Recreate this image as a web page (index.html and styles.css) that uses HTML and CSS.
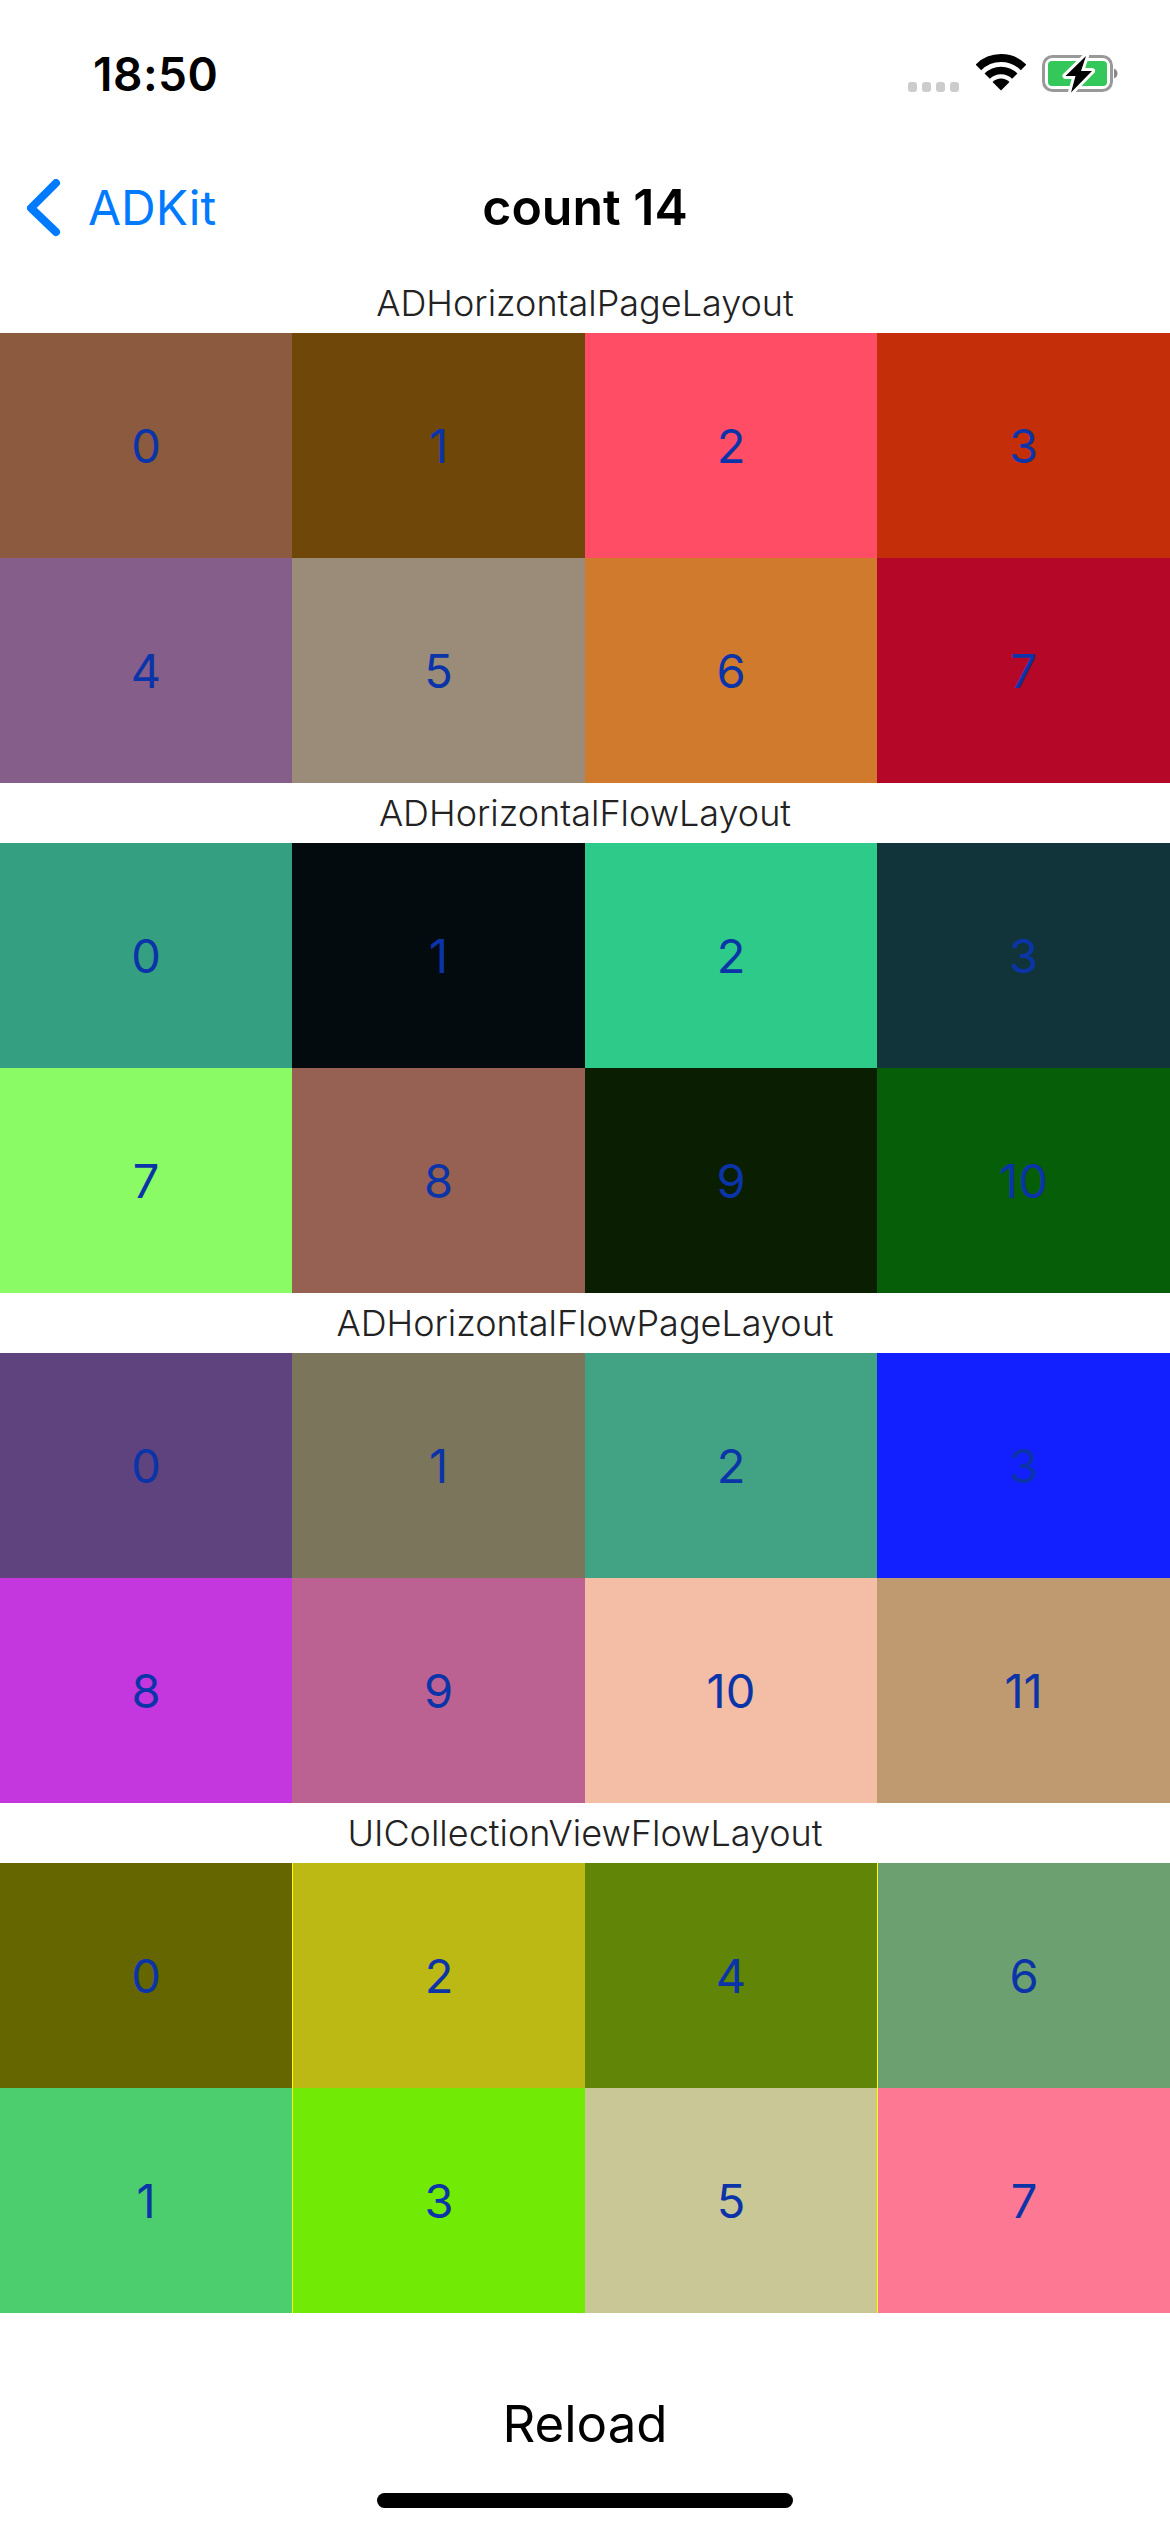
FILE: index.html
```html
<!DOCTYPE html>
<html lang="en">
<head>
  <meta charset="UTF-8">
  <meta name="viewport" content="width=device-width, initial-scale=1.0">
  <title>count 14</title>
  <link rel="stylesheet" href="styles.css">
</head>
<body>
  <div class="status-bar">
    <span class="time">18:50</span>
    <div class="status-icons">
      <div class="signal"><i></i><i></i><i></i><i></i></div>
      <svg class="wifi" width="50" height="40" viewBox="0 0 50 40">
        <path d="M2.4 15.4A32 32 0 0 1 47.6 15.4" fill="none" stroke="#000" stroke-width="8"/>
        <path d="M11.2 24.2A19.5 19.5 0 0 1 38.8 24.2" fill="none" stroke="#000" stroke-width="7.5"/>
        <path d="M25 38.5L16.5 30A12 12 0 0 1 33.5 30Z" fill="#000"/>
      </svg>
      <svg class="battery" width="80" height="44" viewBox="0 0 80 44">
        <rect x="3.5" y="4.5" width="68" height="34" rx="9" fill="none" stroke="#999" stroke-width="3"/>
        <rect x="8" y="9" width="59" height="25" rx="4" fill="#34c759"/>
        <path d="M74 16.5c2.500 1 3.500 3 3.500 5s-1 4-3.500 5z" fill="#888"/>
        <path d="M46 4L25.500 24H35.500L31 40.500L52 19H41Z" fill="#000" stroke="#fff" stroke-width="6" stroke-linejoin="round" paint-order="stroke"/>
      </svg>
    </div>
  </div>

  <div class="nav-bar">
    <a class="back">
      <svg width="34" height="58" viewBox="0 0 34 58">
        <path d="M29 4L4 29L29 53" fill="none" stroke="#007aff" stroke-width="8" stroke-linecap="round" stroke-linejoin="round"/>
      </svg>
      <span>ADKit</span>
    </a>
    <h1>count 14</h1>
  </div>

  <div class="section-title">ADHorizontalPageLayout</div>
  <div class="grid">
    <div class="cell" style="background-color:#8b5a3f">0</div>
    <div class="cell" style="background-color:#6f4708">1</div>
    <div class="cell" style="background-color:#ff4d66">2</div>
    <div class="cell" style="background-color:#c42f0a">3</div>
    <div class="cell" style="background-color:#855f8a">4</div>
    <div class="cell" style="background-color:#9a8c79">5</div>
    <div class="cell" style="background-color:#d07a2d">6</div>
    <div class="cell" style="background-color:#b50828">7</div>
  </div>

  <div class="section-title">ADHorizontalFlowLayout</div>
  <div class="grid">
    <div class="cell" style="background-color:#35a081">0</div>
    <div class="cell" style="background-color:#030b0e">1</div>
    <div class="cell" style="background-color:#2eca89">2</div>
    <div class="cell" style="background-color:#11343b">3</div>
    <div class="cell" style="background-color:#8afb65">7</div>
    <div class="cell" style="background-color:#966052">8</div>
    <div class="cell" style="background-color:#0a1e02">9</div>
    <div class="cell" style="background-color:#075e08">10</div>
  </div>

  <div class="section-title">ADHorizontalFlowPageLayout</div>
  <div class="grid">
    <div class="cell" style="background-color:#5f437f">0</div>
    <div class="cell" style="background-color:#7b755b">1</div>
    <div class="cell" style="background-color:#41a384">2</div>
    <div class="cell" style="background-color:#1220ff">3</div>
    <div class="cell" style="background-color:#c436de">8</div>
    <div class="cell" style="background-color:#bb6293">9</div>
    <div class="cell" style="background-color:#f3bda6">10</div>
    <div class="cell" style="background-color:#bf9a70">11</div>
  </div>

  <div class="section-title">UICollectionViewFlowLayout</div>
  <div class="grid grid-spaced">
    <div class="cell" style="background-color:#666600">0</div>
    <div class="cell" style="background-color:#bcb814">2</div>
    <div class="cell" style="background-color:#618506">4</div>
    <div class="cell" style="background-color:#6ca070">6</div>
    <div class="cell" style="background-color:#4dce6e">1</div>
    <div class="cell" style="background-color:#71ea05">3</div>
    <div class="cell" style="background-color:#cac796">5</div>
    <div class="cell" style="background-color:#fc7893">7</div>
  </div>

  <div class="footer">
    <button class="reload" type="button">Reload</button>
    <div class="home-indicator"></div>
  </div>
</body>
</html>
```

FILE: styles.css
```css
body {
  font-family: Inter, "Liberation Sans", sans-serif;
  background-color: #fff;
  margin: 0;
  height: 2532px;
  overflow: hidden;
}
.status-bar {
  height: 141px;
  box-sizing: border-box;
  padding: 50px 50px 0 93px;
  display: flex;
  justify-content: space-between;
  align-items: flex-start;
}
.time {
  font-size: 46px;
  line-height: 48px;
  font-weight: 600;
  letter-spacing: 0.5px;
  color: #000;
}
.status-icons {
  display: flex;
  align-items: flex-start;
  padding-top: 2px;
}
.signal {
  display: flex;
  gap: 5px;
  margin: 30px 17px 0 0;
}
.signal i {
  display: block;
  width: 9px;
  height: 10px;
  border-radius: 3px;
  background-color: #ccc;
}
.wifi {
  display: block;
  margin-right: 14px;
}
.battery {
  display: block;
}
.nav-bar {
  height: 132px;
  position: relative;
  display: flex;
  align-items: center;
  justify-content: center;
}
.back {
  position: absolute;
  left: 27px;
  top: 37px;
  display: flex;
  align-items: center;
  gap: 27px;
  color: #007aff;
  font-size: 48px;
}
.back svg {
  display: block;
}
.nav-bar h1 {
  margin: 0;
  font-size: 50px;
  font-weight: 600;
  color: #000;
}
.section-title {
  height: 60px;
  display: flex;
  align-items: center;
  justify-content: center;
  font-size: 36px;
  font-weight: 300;
  color: #222;
}
.grid {
  display: grid;
  grid-template-columns: 292px 293px 292px 293px;
  grid-template-rows: 225px 225px;
}
.grid-spaced {
  background-color: #ff0;
}
.grid-spaced .cell:nth-child(even) {
  margin-left: 1px;
}
.cell {
  display: flex;
  align-items: center;
  justify-content: center;
  font-size: 47px;
  color: #0a34a8;
}
.footer {
  display: flex;
  flex-direction: column;
  align-items: center;
}
.reload {
  margin-top: 76px;
  padding: 0;
  height: 68px;
  border: none;
  background: none;
  font-family: inherit;
  font-size: 51px;
  color: #000;
}
.home-indicator {
  margin-top: 36px;
  width: 416px;
  height: 15px;
  border-radius: 8px;
  background-color: #000;
}
```
